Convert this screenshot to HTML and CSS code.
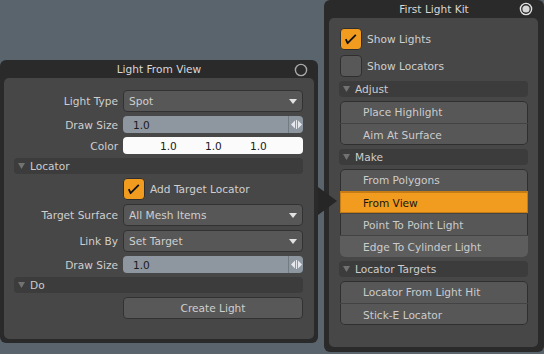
FILE: index.html
```html
<!DOCTYPE html>
<html>
<head>
<meta charset="utf-8">
<link rel="stylesheet" href="styles.css">
</head>
<body>
<div class="desk">
  <div class="win win-left">
    <div class="titlebar">
      <span class="title">Light From View</span>
      <svg class="close close-left" width="14" height="14" viewBox="0 0 14 14"><circle cx="7" cy="7" r="5.6" fill="none" stroke="#a9a9a9" stroke-width="1.4"/></svg>
    </div>
    <div class="panel form">
      <div class="row"><span class="lbl">Light Type</span>
        <div class="field dropdown"><span>Spot</span><svg class="caret" width="8" height="5" viewBox="0 0 8 5"><path d="M0 0H8L4 5Z" fill="#e2e2e2"/></svg></div>
      </div>
      <div class="row slim"><span class="lbl">Draw Size</span>
        <div class="field spin"><span class="val">1.0</span><span class="arrows"><svg width="11" height="9" viewBox="0 0 11 9"><path d="M0 4.5L4 0.5V8.5Z" fill="#e6eaee"/><rect x="5" y="0" width="1" height="9" fill="#e6eaee"/><path d="M11 4.5L7 0.5V8.5Z" fill="#e6eaee"/></svg></span></div>
      </div>
      <div class="row slim"><span class="lbl">Color</span>
        <div class="field color"><span>1.0</span><span>1.0</span><span>1.0</span></div>
      </div>
      <div class="section"><svg class="tri" width="7" height="6" viewBox="0 0 7 6"><path d="M0 0H7L3.5 6Z" fill="#727272"/></svg>Locator</div>
      <div class="row"><span class="lbl"></span>
        <div class="check-line"><span class="checkbox on"><svg width="22" height="22" viewBox="0 0 22 22"><path d="M5.8 11.2L7.6 15.2L15.8 6.8" fill="none" stroke="#111" stroke-width="1.8" stroke-linejoin="round"/></svg></span>Add Target Locator</div>
      </div>
      <div class="row"><span class="lbl">Target Surface</span>
        <div class="field dropdown"><span>All Mesh Items</span><svg class="caret" width="8" height="5" viewBox="0 0 8 5"><path d="M0 0H8L4 5Z" fill="#e2e2e2"/></svg></div>
      </div>
      <div class="row"><span class="lbl">Link By</span>
        <div class="field dropdown"><span>Set Target</span><svg class="caret" width="8" height="5" viewBox="0 0 8 5"><path d="M0 0H8L4 5Z" fill="#e2e2e2"/></svg></div>
      </div>
      <div class="row slim"><span class="lbl">Draw Size</span>
        <div class="field spin"><span class="val">1.0</span><span class="arrows"><svg width="11" height="9" viewBox="0 0 11 9"><path d="M0 4.5L4 0.5V8.5Z" fill="#e6eaee"/><rect x="5" y="0" width="1" height="9" fill="#e6eaee"/><path d="M11 4.5L7 0.5V8.5Z" fill="#e6eaee"/></svg></span></div>
      </div>
      <div class="section"><svg class="tri" width="7" height="6" viewBox="0 0 7 6"><path d="M0 0H7L3.5 6Z" fill="#727272"/></svg>Do</div>
      <div class="row"><span class="lbl"></span>
        <div class="field button">Create Light</div>
      </div>
    </div>
  </div>

  <div class="win win-right">
    <div class="titlebar">
      <span class="title">First Light Kit</span>
      <svg class="close close-right" width="14" height="14" viewBox="0 0 14 14"><circle cx="7" cy="7" r="5.6" fill="none" stroke="#e2e2e2" stroke-width="1.4"/><circle cx="7" cy="7" r="3.6" fill="#d6d6d6"/></svg>
    </div>
    <div class="panel kit">
      <div class="check-line kit-check"><span class="checkbox on"><svg width="22" height="22" viewBox="0 0 22 22"><path d="M5.8 11.2L7.6 15.2L15.8 6.8" fill="none" stroke="#111" stroke-width="1.8" stroke-linejoin="round"/></svg></span>Show Lights</div>
      <div class="check-line kit-check"><span class="checkbox"></span>Show Locators</div>
      <div class="section"><svg class="tri" width="7" height="6" viewBox="0 0 7 6"><path d="M0 0H7L3.5 6Z" fill="#727272"/></svg>Adjust</div>
      <div class="group">
        <div class="item">Place Highlight</div>
        <div class="item">Aim At Surface</div>
      </div>
      <div class="section"><svg class="tri" width="7" height="6" viewBox="0 0 7 6"><path d="M0 0H7L3.5 6Z" fill="#727272"/></svg>Make</div>
      <div class="group">
        <div class="item">From Polygons</div>
        <div class="item active">From View</div>
        <div class="item">Point To Point Light</div>
        <div class="item hover">Edge To Cylinder Light</div>
      </div>
      <div class="section"><svg class="tri" width="7" height="6" viewBox="0 0 7 6"><path d="M0 0H7L3.5 6Z" fill="#727272"/></svg>Locator Targets</div>
      <div class="group">
        <div class="item">Locator From Light Hit</div>
        <div class="item">Stick-E Locator</div>
      </div>
    </div>
  </div>

  <div class="pointer"></div>
</div>
</body>
</html>
```

FILE: styles.css
```css
* { box-sizing: border-box; margin: 0; padding: 0; }
html, body { width: 544px; height: 354px; overflow: hidden; }
body {
  background: #59646d;
  font-family: "DejaVu Sans", sans-serif;
  font-size: 10.6px;
  color: #cfcfcf;
}
.desk { position: relative; width: 544px; height: 354px; }

.win {
  position: absolute;
  background: #2a2a2a;
  border-radius: 6px;
  display: flex;
  flex-direction: column;
}
.win-left { left: 0; top: 60px; width: 318px; height: 283px; }
.win-right { left: 324px; top: 0; width: 220px; height: 352px; }

.titlebar {
  position: relative;
  height: 18px;
  flex: none;
  display: flex;
  align-items: center;
  justify-content: center;
  color: #d8d8d8;
}
.close { position: absolute; top: 3px; }
.close-left { right: 10px; top: 3px; }
.close-right { right: 11px; top: 2px; }

.panel {
  flex: 1;
  background: #474747;
  border-radius: 5px;
}
.win-left .panel { margin: 0 4px 4px 4px; padding: 12px 11px 0 10px; }
.win-right .panel { margin: 0 6px 5px 5px; padding: 10px 10px 0 10px; }

.form { display: flex; flex-direction: column; gap: 4px; }
.row { display: flex; align-items: center; height: 22px; }
.row.slim { height: 17px; }
.lbl { width: 104px; margin-right: 5px; text-align: right; flex: none; }
.field { width: 180px; height: 100%; border-radius: 4px; display: flex; align-items: center; }

.dropdown {
  background: #575757;
  border: 1px solid #323232;
  padding: 0 5px 0 5px;
  justify-content: space-between;
}
.spin {
  background: #8e979f;
  color: #1b1b1b;
  padding-left: 10px;
  justify-content: space-between;
  overflow: hidden;
}
.spin .arrows {
  height: 100%;
  width: 15px;
  border-left: 1px solid #737b82;
  display: flex;
  align-items: center;
  justify-content: center;
}
.color {
  background: #fbfbfb;
  color: #1b1b1b;
  padding-left: 37px;
}
.color span { width: 45px; }
.button {
  background: #585858;
  border: 1px solid #323232;
  justify-content: center;
  color: #cfcfcf;
}

.section {
  height: 16px;
  background: #3c3c3c;
  border-radius: 4px;
  display: flex;
  align-items: center;
  padding-left: 4px;
  gap: 5px;
  color: #cccccc;
  flex: none;
}

.check-line { display: flex; align-items: center; gap: 5px; height: 22px; }
.checkbox {
  width: 22px;
  height: 22px;
  border-radius: 4px;
  border: 1px solid #2f2f2f;
  background: #585858;
  flex: none;
  position: relative;
}
.checkbox.on { background: #f29c1f; }
.checkbox svg { position: absolute; left: -1px; top: -1px; }

.kit { display: flex; flex-direction: column; gap: 4px; }
.kit-check { margin-left: 1px; }
.kit-check + .kit-check { margin-top: 1px; }
.group {
  margin-left: 1px;
  background: #575757;
  border-radius: 5px;
  box-shadow: inset 0 0 0 1px #2f2f2f;
  overflow: hidden;
  flex: none;
}
.item {
  height: 22px;
  padding-left: 23px;
  display: flex;
  align-items: center;
  color: #cccccc;
}
.item + .item { border-top: 1px solid #434343; }
.item.active {
  background: #f29c1f;
  color: #161616;
  box-shadow: inset 0 0 0 1px #c67c14;
  border-top-color: #c67c14;
}
.item.hover { background: #5d5d5d; }

.pointer {
  position: absolute;
  left: 318px;
  top: 187px;
  width: 0;
  height: 0;
  border-top: 14.5px solid transparent;
  border-bottom: 14.5px solid transparent;
  border-left: 19px solid #262626;
}
```
